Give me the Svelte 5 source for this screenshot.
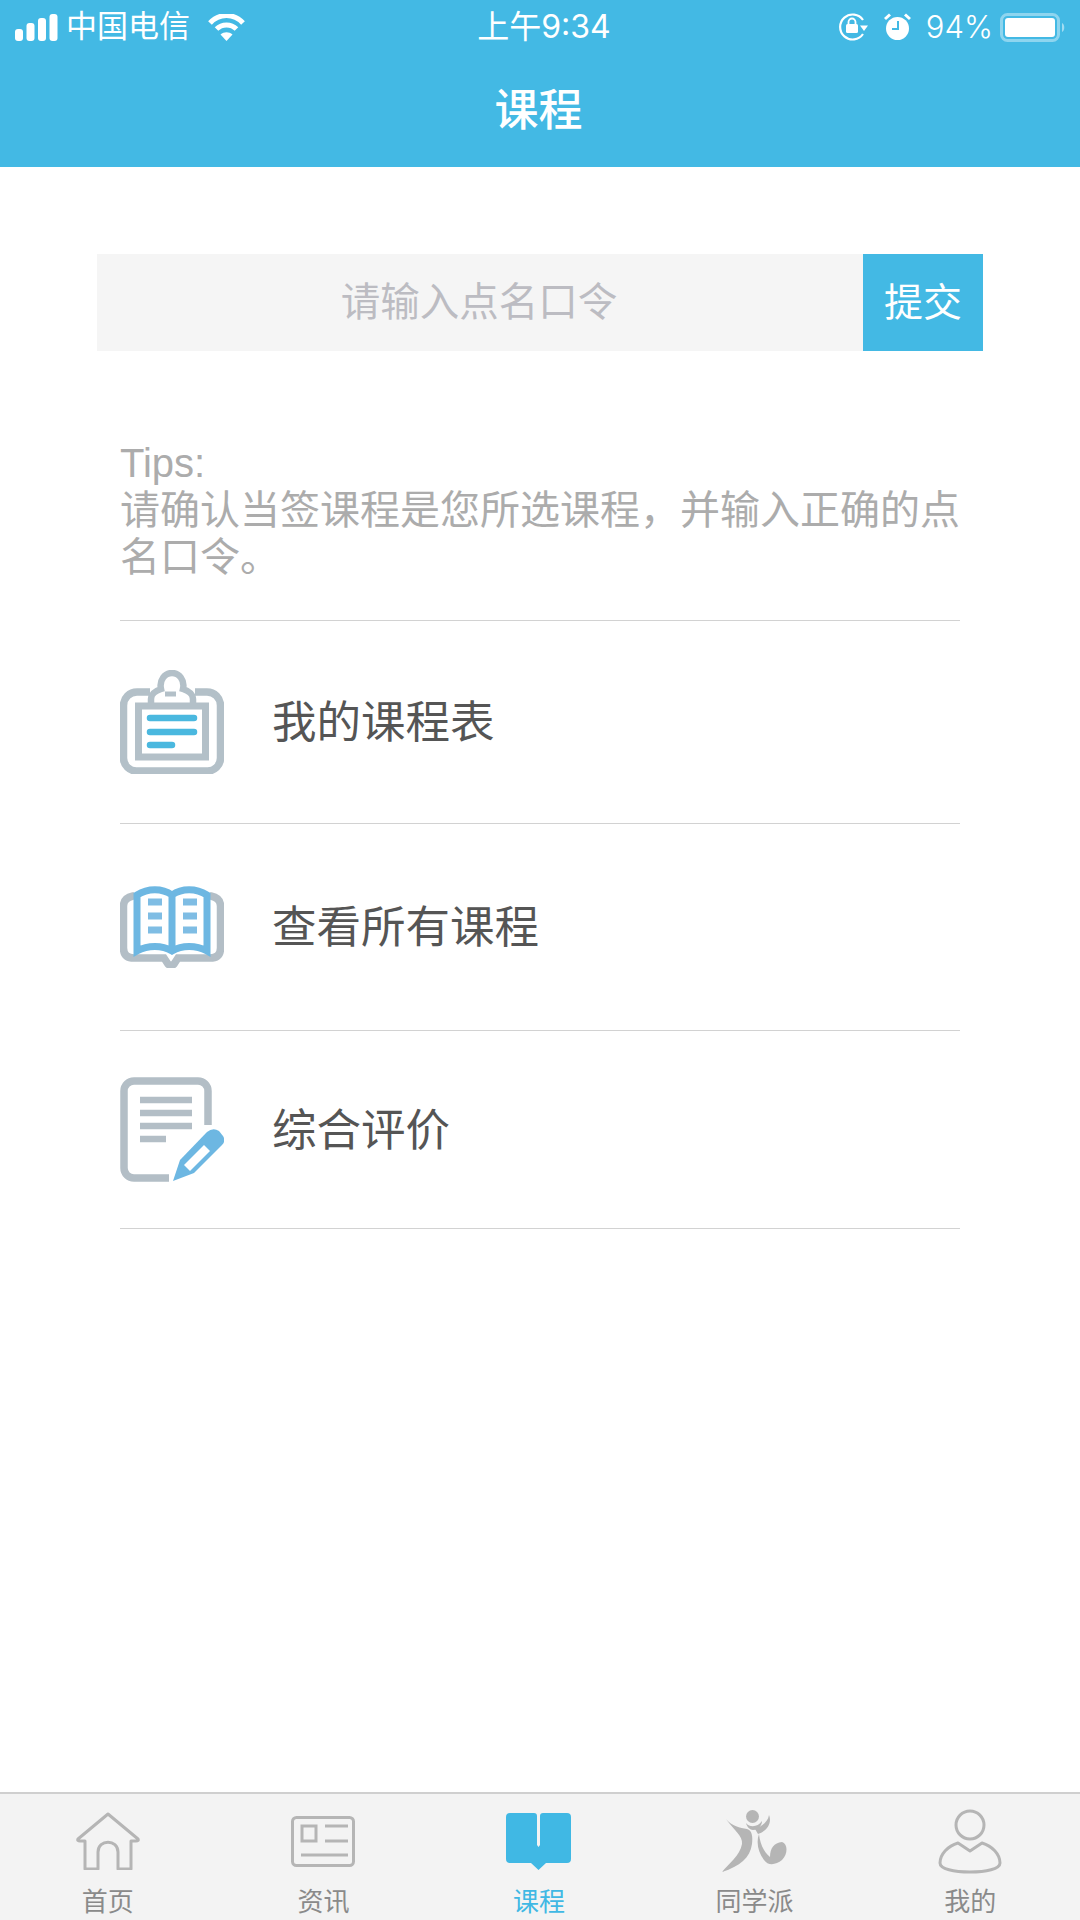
<script>
  const lessonRows = [
    { id: 'table', label: '我的课程表', height: 203 },
    { id: 'all', label: '查看所有课程', height: 207 },
    { id: 'review', label: '综合评价', height: 198 }
  ];

  const tabs = [
    { id: 'home', label: '首页' },
    { id: 'news', label: '资讯' },
    { id: 'course', label: '课程', active: true },
    { id: 'group', label: '同学派' },
    { id: 'me', label: '我的' }
  ];

  let code = '';
</script>

<div class="page">
  <header class="top">
    <div class="status">
      <div class="status-left">
        <svg class="signal" width="43" height="27" viewBox="0 0 43 27">
          <rect x="0" y="15" width="8" height="12" rx="3" />
          <rect x="11.5" y="9" width="8" height="18" rx="3" />
          <rect x="23" y="4" width="8" height="23" rx="3" />
          <rect x="34.5" y="0" width="8" height="27" rx="3" />
        </svg>
        <span class="carrier">中国电信</span>
        <svg class="wifi" width="37" height="27" viewBox="0 0 37 27">
          <path d="M2 9C11-1 26-1 35 9" fill="none" stroke="#fff" stroke-width="5" />
          <path d="M8.5 15C14 9.5 23 9.5 28.500 15" fill="none" stroke="#fff" stroke-width="5" />
          <path d="M18.5 27L12.500 20.500C16 17.500 21 17.500 24.500 20.500Z" fill="#fff" />
        </svg>
      </div>
      <span class="clock">上午9:34</span>
      <div class="status-right">
        <svg width="30" height="28" viewBox="0 0 30 28">
          <path d="M25 7A12.500 12.500 0 1 0 25 21" fill="none" stroke="#fff" stroke-width="2.200" />
          <path d="M22 12.500H30L26 18Z" fill="#fff" />
          <rect x="8" y="11" width="12" height="9" rx="1.500" fill="#fff" />
          <path d="M10.500 11V9A3.500 3.500 0 0 1 17.500 9V11" fill="none" stroke="#fff" stroke-width="1.800" />
        </svg>
        <svg class="alarm" width="27" height="28" viewBox="0 0 27 28">
          <circle cx="13.500" cy="15.500" r="11.500" fill="#fff" />
          <path d="M1 6L6 1.500M26 6L21 1.500" stroke="#fff" stroke-width="3" />
          <path d="M14 8V16H8" fill="none" stroke="#43b9e4" stroke-width="2" />
        </svg>
        <span class="percent">94%</span>
        <svg class="battery" width="67" height="29" viewBox="0 0 67 29">
          <rect x="1.500" y="1.500" width="57" height="26" rx="6" fill="none" stroke="#fff" stroke-opacity=".4" stroke-width="3" />
          <rect x="5" y="5" width="50" height="19" rx="3" fill="#fff" />
          <path d="M62 10C65 11 65 18 62 19Z" fill="#fff" fill-opacity=".5" />
        </svg>
      </div>
    </div>
    <h1>课程</h1>
  </header>

  <main>
    <form class="roll-call" on:submit|preventDefault>
      <input bind:value={code} placeholder="请输入点名口令" />
      <button type="submit">提交</button>
    </form>

    <p class="tips">Tips:<br />请确认当签课程是您所选课程，并输入正确的点名口令。</p>

    <ul class="rows">
      {#each lessonRows as row}
        <li class="row" style="height: {row.height}px">
          {#if row.id === 'table'}
            <svg class="row-icon" width="104" height="104" viewBox="0 0 104 104" fill="none" stroke="#b3c0c8">
              <path d="M30 22H17A13.500 13.500 0 0 0 3.500 35.500V88A13 13 0 0 0 17 101H87A13 13 0 0 0 100.500 88V35.500A13.500 13.500 0 0 0 87 22H75" stroke-width="7.500" />
              <rect x="18.500" y="36" width="67" height="51" stroke-width="7" />
              <path d="M31 34V29C31 24 35 21 41 19C39 10 45 3 52 3C59 3 65 10 63 19C69 21 73 24 73 29V34" stroke-width="6.500" />
              <path d="M45 24H56" stroke-width="5" />
              <path d="M30 48H74M30 62H74M30 75H52" stroke="#4ab8df" stroke-width="6.500" stroke-linecap="round" />
            </svg>
          {:else if row.id === 'all'}
            <svg class="row-icon" width="104" height="82" viewBox="0 0 104 82" fill="none">
              <path d="M14 10H13Q3.500 12 3.500 20V62Q3.500 72 14 72H44L48 78Q51 81 54 78L58 72H90Q100.500 72 100.500 62V20Q100.500 12 91 10H90" stroke="#b3bec6" stroke-width="7.500" />
              <path d="M17 65V9C28 2 42 2 52 9C62 2 76 2 87 9V65C76 59 62 59 52 65C42 59 28 59 17 65ZM52 9V65" fill="#fff" stroke="#6db7e2" stroke-width="7" />
              <path d="M28 16H42M28 30H42M28 44H42M63 16H77M63 30H77M63 44H77" stroke="#7fbde4" stroke-width="7" />
            </svg>
          {:else}
            <svg class="row-icon" width="104" height="105" viewBox="0 0 104 105" fill="none">
              <path d="M88 48V14A10 10 0 0 0 78 4H14A10 10 0 0 0 4 14V91A10 10 0 0 0 14 101H49" stroke="#b3bec6" stroke-width="7.500" />
              <path d="M20 23H72M20 36H72M20 49H72M20 62H46" stroke="#b3bec6" stroke-width="6.500" />
              <path d="M53 104L60 83L87 55Q93 50 99 54L103 59Q106 64 102 68L74 96Z" fill="#6db7e2" />
              <path d="M64 88L84 68L90 74L70 94Z" fill="#fff" />
            </svg>
          {/if}
          <span class="row-label">{row.label}</span>
        </li>
      {/each}
    </ul>
  </main>

  <nav class="tabbar">
    {#each tabs as tab}
      <div class="tab" class:active={tab.active}>
        <div class="tab-icon">
          {#if tab.id === 'home'}
            <svg width="64" height="58" viewBox="0 0 64 58" fill="none" stroke="#b5b5b5" stroke-width="3" stroke-linejoin="round">
              <path d="M32 2L2 27Q1 29 4 29H9V57H22V40C22 27 42 27 42 40V57H55V29H60Q63 29 62 27Z" />
            </svg>
          {:else if tab.id === 'news'}
            <svg width="64" height="51" viewBox="0 0 64 51" fill="none" stroke="#b5b5b5" stroke-width="3">
              <rect x="1.500" y="1.500" width="61" height="48" rx="4" />
              <rect x="11" y="10" width="14" height="15" />
              <path d="M34 10H57M34 25H57M10 39H57" />
            </svg>
          {:else if tab.id === 'course'}
            <svg width="65" height="57" viewBox="0 0 65 57">
              <path d="M4 0H28Q31 0 31 3V32L32.500 34L34 32V3Q34 0 37 0H61Q65 0 65 4V46Q65 50 61 50H40L32.500 57L25 50H4Q0 50 0 46V4Q0 0 4 0Z" fill="#40b8e4" />
            </svg>
          {:else if tab.id === 'group'}
            <svg width="66" height="63" viewBox="0 0 66 63" fill="#b5b5b5">
              <circle cx="30.500" cy="6.500" r="6.500" />
              <path d="M4 9C10 16 18 18 25 19C30 20 31 27 30 34C28 48 18 56 0 62C6 54 18 46 20 34C21 26 12 20 4 9Z" />
              <path d="M24 13C28 18 36 17 40 11C40 15 37 20 31 20C28 20 25 17 24 13Z" />
              <path d="M33 19C40 16 46 12 47 5C50 12 46 21 36 24Z" />
              <path d="M37 24C38 34 42 42 48 47C48 38 52 33 60 32C66 34 66 44 60 50C54 55 46 56 42 50C36 42 34 32 37 24Z" />
            </svg>
          {:else}
            <svg width="64" height="65" viewBox="0 0 64 65" fill="none" stroke="#b5b5b5" stroke-width="3">
              <circle cx="32" cy="16" r="14" />
              <path d="M20 34C10 37 2 45 2 54C2 60 16 63 32 63C48 63 62 60 62 54C62 45 54 37 44 34L32 42Z" stroke-linejoin="round" />
            </svg>
          {/if}
        </div>
        <span>{tab.label}</span>
      </div>
    {/each}
  </nav>
</div>

<style>
  :global(body) {
    background: #fff;
  }
  .page {
    display: flex;
    flex-direction: column;
    height: 1920px;
    overflow: hidden;
    font-family: "Liberation Sans", "Noto Sans CJK SC", sans-serif;
  }
  .top {
    height: 167px;
    background: #43b9e4;
    color: #fff;
    flex-shrink: 0;
  }
  .status {
    display: grid;
    grid-template-columns: 1fr auto 1fr;
    align-items: center;
    height: 54px;
    padding: 0 13px 0 15px;
  }
  .status-left,
  .status-right {
    display: flex;
    align-items: center;
  }
  .status-right {
    justify-content: flex-end;
  }
  .signal {
    fill: #fff;
    margin-right: 8px;
  }
  .carrier {
    font-size: 31px;
    line-height: 54px;
    margin-right: 18px;
  }
  .clock {
    font-family: Inter, "Noto Sans CJK SC", sans-serif;
    font-size: 32px;
    line-height: 54px;
    margin-left: 6px;
  }
  .percent {
    font-family: Inter, sans-serif;
    font-size: 31px;
    font-weight: 300;
    line-height: 54px;
    margin: 0 7px 0 15px;
  }
  .alarm {
    margin-left: 16px;
  }
  h1 {
    margin: 0;
    padding-right: 3px;
    font-size: 44px;
    font-weight: 500;
    line-height: 114px;
    text-align: center;
  }
  main {
    flex: 1;
  }
  .roll-call {
    display: flex;
    height: 97px;
    margin: 87px 97px 0;
  }
  input {
    flex: 1;
    min-width: 0;
    border: 0;
    padding: 0 2px 1px 0;
    background: #f5f5f5;
    font: inherit;
    font-size: 39.500px;
    text-align: center;
    outline: none;
  }
  input::placeholder {
    color: #bcbcc2;
    opacity: 1;
  }
  button {
    width: 120px;
    border: 0;
    padding: 0 0 7px;
    background: #43b9e4;
    color: #fff;
    font: inherit;
    font-size: 39px;
  }
  .tips {
    margin: 89px 120px 0;
    font-size: 40px;
    line-height: 47px;
    color: #acacac;
  }
  .rows {
    list-style: none;
    margin: 39px 120px 0;
    padding: 0;
    border-top: 1px solid #d2d2d2;
  }
  .row {
    display: flex;
    align-items: center;
    gap: 48px;
    box-sizing: border-box;
    border-bottom: 1px solid #d2d2d2;
    font-size: 44.500px;
    color: #555;
  }
  .row-label {
    padding-bottom: 7px;
  }
  .row-icon {
    flex-shrink: 0;
  }
  .tabbar {
    display: grid;
    grid-template-columns: repeat(5, 1fr);
    height: 128px;
    flex-shrink: 0;
    border-top: 2px solid #cfcfcf;
    box-sizing: border-box;
    padding-right: 2px;
    background: #f3f3f3;
    color: #8a8a8a;
  }
  .tab {
    display: flex;
    flex-direction: column;
    align-items: center;
  }
  .tab-icon {
    display: flex;
    align-items: center;
    justify-content: center;
    height: 66px;
    margin-top: 14px;
  }
  .tab span {
    font-size: 26px;
    line-height: 34px;
    margin-top: 11px;
  }
  .tab.active {
    color: #40b8e4;
  }
</style>
